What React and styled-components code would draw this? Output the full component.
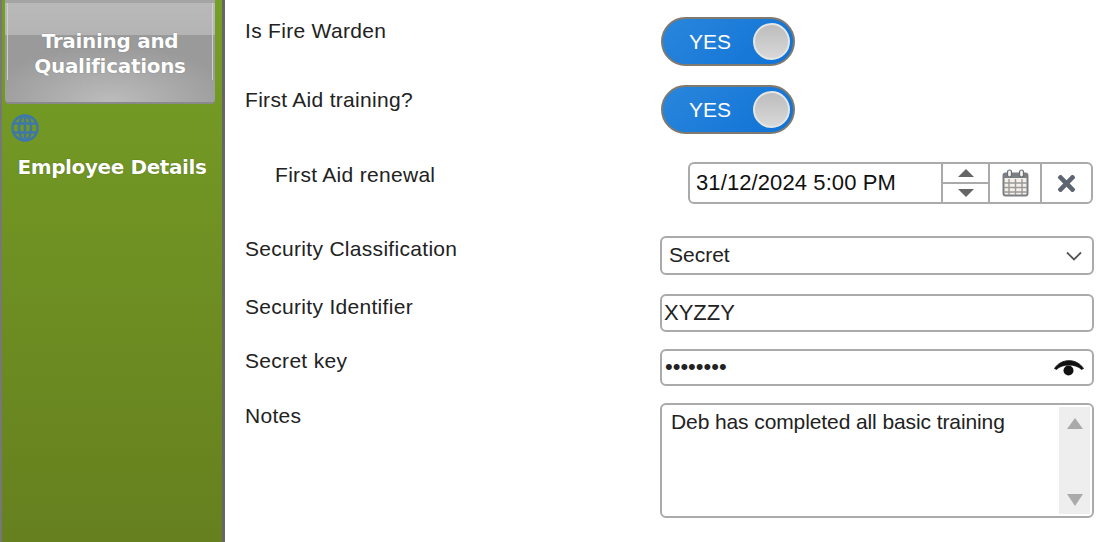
import React from 'react';
import styled, { createGlobalStyle } from 'styled-components';
import { FaTimes } from 'react-icons/fa';

const GlobalStyle = createGlobalStyle`
  html, body {
    margin: 0;
    padding: 0;
    background: #fff;
    overflow: hidden;
  }
  body {
    font-family: 'Liberation Sans', Arial, sans-serif;
    color: #1a1a1a;
  }
`;

const Page = styled.div`
  display: flex;
  width: 1110px;
  height: 542px;
  overflow: hidden;
`;

const Sidebar = styled.aside`
  width: 225px;
  height: 542px;
  box-sizing: border-box;
  flex: none;
  padding-left: 5px;
  padding-right: 7px;
  border-left: 2px solid #777;
  border-right: 3px solid #666;
  background: linear-gradient(180deg, #769f26 0%, #66801f 100%);
  display: flex;
  flex-direction: column;
`;

const ActiveTab = styled.div`
  height: 104px;
  width: 210px;
  margin-left: -2px;
  box-sizing: border-box;
  padding-top: 29px;
  border-radius: 0 0 4px 4px;
  border-bottom: 2px solid #8a8a8a;
  background:
    linear-gradient(#cfcfcf, #cfcfcf) 2px 3px / 1px 77px no-repeat,
    linear-gradient(#cfcfcf, #cfcfcf) 207px 3px / 1px 77px no-repeat,
    linear-gradient(180deg, #a4a4a4 0, #a4a4a4 3px, #b9b9b9 3px, #b4b4b4 35px, transparent 35px),
    radial-gradient(ellipse 60% 55% at 50% 100%, #bcbcbc 0%, #9a9a9a 100%);
  color: #fff;
  font-family: 'DejaVu Sans', sans-serif;
  font-size: 20px;
  font-weight: 700;
  line-height: 25px;
  letter-spacing: -0.3px;
  text-align: center;
  text-shadow: 0 0 1px rgba(90, 90, 90, 0.8);
`;

const NavIcon = styled.svg`
  display: block;
  width: 30px;
  height: 30px;
  margin: 9px 0 0 3px;
`;

const NavLabel = styled.div`
  margin-top: 11px;
  width: 210px;
  text-align: center;
  color: #fff;
  font-family: 'DejaVu Sans', sans-serif;
  font-size: 20px;
  font-weight: 700;
  line-height: 26px;
  letter-spacing: -0.4px;
  text-shadow: 0 0 1px rgba(40, 60, 0, 0.8);
`;

const Form = styled.main`
  flex: 1;
  padding: 17px 16px 0 20px;
  display: flex;
  flex-direction: column;
`;

const Row = styled.div`
  display: grid;
  grid-template-columns: 415px 434px;
  margin-bottom: ${props => props.$after}px;
`;

const Label = styled.label`
  font-size: 21px;
  line-height: 24px;
  color: #222;
  margin-top: ${props => props.$top}px;
  padding-left: ${props => (props.$indent ? 30 : 0)}px;
  letter-spacing: 0.3px;
`;

const Toggle = styled.div`
  width: 134px;
  height: 49px;
  box-sizing: border-box;
  margin-left: 1px;
  border: 2px solid #7f7a70;
  border-radius: 25px;
  background: linear-gradient(135deg, #2a86dc 0%, #0f72d6 100%);
  display: flex;
  align-items: center;
  justify-content: space-between;
  padding: 0 3px 0 26px;
  color: #fff;
  font-size: 21px;
`;

const Knob = styled.span`
  width: 37px;
  height: 37px;
  box-sizing: border-box;
  border-radius: 50%;
  border: 2px solid #e6e6e6;
  background: linear-gradient(180deg, #bdbdbd 0%, #d8d8d8 100%);
`;

const DateBox = styled.div`
  width: 405px;
  height: 42px;
  box-sizing: border-box;
  margin-left: 28px;
  border: 2px solid #aaa;
  border-radius: 6px;
  display: flex;
  align-items: stretch;
`;

const DateValue = styled.div`
  flex: 1;
  padding-left: 6px;
  font-size: 22px;
  line-height: 38px;
  letter-spacing: 0.1px;
  color: #111;
`;

const Spinner = styled.div`
  width: 47px;
  box-sizing: border-box;
  display: flex;
  flex-direction: column;
  border-left: 2px solid #aaa;
`;

const SpinPart = styled.div`
  flex: 1;
  display: flex;
  align-items: center;
  justify-content: center;
  & + & {
    border-top: 2px solid #aaa;
  }
`;

const Arrow = styled.span`
  width: 0;
  height: 0;
  border-left: ${props => props.$size}px solid transparent;
  border-right: ${props => props.$size}px solid transparent;
  border-bottom: ${props => (props.$down ? 0 : `${props.$tall}px solid ${props.$color}`)};
  border-top: ${props => (props.$down ? `${props.$tall}px solid ${props.$color}` : 0)};
`;

const DateButton = styled.div`
  width: ${props => props.$width}px;
  box-sizing: border-box;
  border-left: 2px solid #aaa;
  display: flex;
  align-items: center;
  justify-content: center;
  color: #5d6670;
  font-size: 25px;
`;

const Field = styled.div`
  height: ${props => props.$height}px;
  box-sizing: border-box;
  border: 2px solid #aaa;
  border-radius: 6px;
  display: flex;
  align-items: center;
  background: #fff;
`;

const SelectText = styled.span`
  flex: 1;
  padding-left: 7px;
  padding-bottom: 2px;
  font-size: 21px;
  color: #222;
`;

const TextInput = styled.input`
  flex: 1;
  min-width: 0;
  border: 0;
  outline: 0;
  padding: 0 0 ${props => props.$lift}px ${props => props.$pad}px;
  background: transparent;
  font-family: 'Liberation Sans', Arial, sans-serif;
  font-size: ${props => props.$size}px;
  color: #222;
`;

const NotesBox = styled.div`
  height: 115px;
  box-sizing: border-box;
  border: 2px solid #aaa;
  border-radius: 6px;
  display: flex;
  padding: 2px;
`;

const NotesText = styled.div`
  flex: 1;
  padding: 3px 0 0 7px;
  font-size: 21px;
  line-height: 24px;
  letter-spacing: -0.1px;
  color: #222;
`;

const ScrollTrack = styled.div`
  width: 31px;
  background: #eee;
  display: flex;
  flex-direction: column;
  align-items: center;
  justify-content: space-between;
  padding: 11px 0 8px;
`;

const Calendar = () => (
  <svg width="27" height="28" viewBox="0 0 27 28">
    <rect x="1.5" y="4.5" width="24" height="22" rx="2" fill="#f4efe8" stroke="#7b7f84" strokeWidth="2" />
    <rect x="2" y="5" width="23" height="4" fill="#7b7f84" />
    <rect x="5.500" y="1" width="4" height="7" rx="2" fill="#f4efe8" stroke="#666e78" strokeWidth="1.200" />
    <rect x="17.500" y="1" width="4" height="7" rx="2" fill="#f4efe8" stroke="#666e78" strokeWidth="1.200" />
    <path
      d="M7 10v16M13.500 10v16M20 10v16M2 14h23M2 18.500h23M2 23h23"
      stroke="#9b9a98"
      strokeWidth="1.400"
      fill="none"
    />
  </svg>
);

const Chevron = () => (
  <svg width="16" height="10" viewBox="0 0 16 10" style={{ marginRight: 10 }}>
    <path d="M1 1.500l7 7 7-7" stroke="#555" strokeWidth="1.800" fill="none" />
  </svg>
);

const Eye = () => (
  <svg width="30" height="18" viewBox="0 0 30 18" style={{ marginRight: 8 }}>
    <path d="M0.500 9.500C7 -1 23 -1 29.500 9.500L27.500 10.500C22 4.500 8 4.500 2.500 10.500Z" fill="#111" stroke="#111" strokeWidth="0.800" />
    <circle cx="14.500" cy="11.500" r="5" fill="#111" />
  </svg>
);

const App = () => {
  return (
    <Page>
      <GlobalStyle />
      <Sidebar>
        <ActiveTab>
          Training and
          <br />
          Qualifications
        </ActiveTab>
        <NavIcon viewBox="0 0 30 30" fill="none" stroke="#3f78a8" strokeWidth="2.500">
          <circle cx="15" cy="15" r="12.500" />
          <ellipse cx="15" cy="15" rx="6" ry="12.500" />
          <path d="M15 2.500v25M4 10.500h22M4 19.500h22" />
        </NavIcon>
        <NavLabel>Employee Details</NavLabel>
      </Sidebar>
      <Form>
        <Row $after={19}>
          <Label $top={2}>Is Fire Warden</Label>
          <Toggle>
            YES
            <Knob />
          </Toggle>
        </Row>
        <Row $after={28}>
          <Label $top={3}>First Aid training?</Label>
          <Toggle>
            YES
            <Knob />
          </Toggle>
        </Row>
        <Row $after={32}>
          <Label $top={1} $indent>
            First Aid renewal
          </Label>
          <DateBox>
            <DateValue>31/12/2024 5:00 PM</DateValue>
            <Spinner>
              <SpinPart>
                <Arrow $size={8} $tall={8} $color="#666" />
              </SpinPart>
              <SpinPart>
                <Arrow $size={8} $tall={8} $color="#666" $down />
              </SpinPart>
            </Spinner>
            <DateButton $width={52}>
              <Calendar />
            </DateButton>
            <DateButton $width={51}>
              <FaTimes />
            </DateButton>
          </DateBox>
        </Row>
        <Row $after={19}>
          <Label $top={1}>Security Classification</Label>
          <Field $height={39}>
            <SelectText>Secret</SelectText>
            <Chevron />
          </Field>
        </Row>
        <Row $after={17}>
          <Label $top={1}>Security Identifier</Label>
          <Field $height={38}>
            <TextInput $size={22} $pad={2} $lift={0} readOnly defaultValue="XYZZY" />
          </Field>
        </Row>
        <Row $after={17}>
          <Label>Secret key</Label>
          <Field $height={37}>
            <TextInput $size={22} $pad={3} $lift={2} type="password" readOnly defaultValue="password" />
            <Eye />
          </Field>
        </Row>
        <Row $after={0}>
          <Label $top={1}>Notes</Label>
          <NotesBox>
            <NotesText>Deb has completed all basic training</NotesText>
            <ScrollTrack>
              <Arrow $size={8} $tall={11} $color="#aaa" />
              <Arrow $size={8} $tall={12} $color="#aaa" $down />
            </ScrollTrack>
          </NotesBox>
        </Row>
      </Form>
    </Page>
  );
};

export default App;
